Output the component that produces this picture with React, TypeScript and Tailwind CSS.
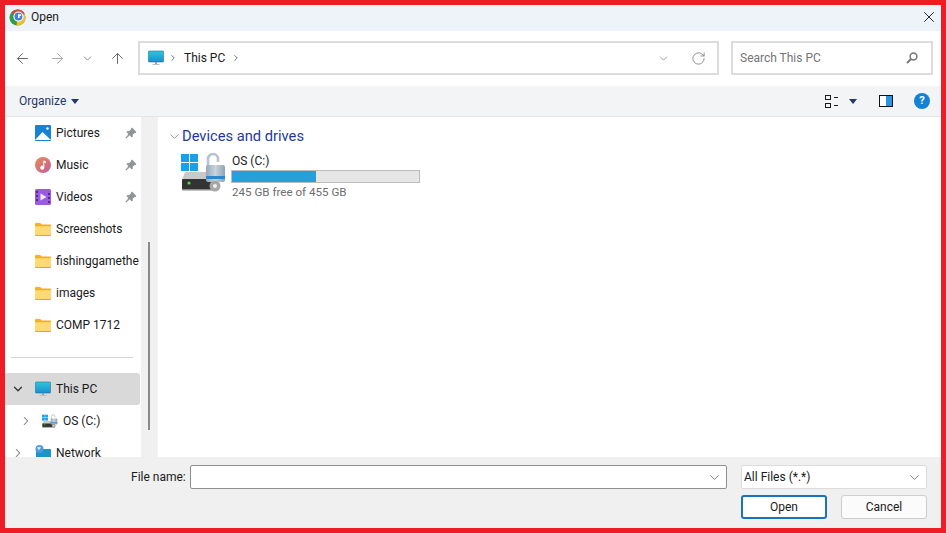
import { ArrowLeft, ArrowRight, ArrowUp, ChevronDown, ChevronRight, RotateCw, X } from 'lucide-react'

function ChromeLogo() {
  return (
    <svg width="17" height="17" viewBox="0 0 18 18">
      <circle cx="9" cy="9" r="8.500" fill="#2f9e4c" />
      <path d="M9 .5a8.500 8.500 0 0 1 7.600 4.700L9 9 2.600 3.500A8.500 8.500 0 0 1 9 .5z" fill="#d9453a" />
      <path d="M17.500 9A8.500 8.500 0 0 1 8 17.400L9 9l7.200-4a8.500 8.500 0 0 1 1.300 4z" fill="#f4bd2a" />
      <circle cx="10" cy="8" r="5.400" fill="#fff" />
      <circle cx="10" cy="8" r="4.200" fill="#3f80e4" />
      <path d="M9.500 5.500h3.400v1.800H11.300v2.200H9.500z" fill="#fff" />
    </svg>
  )
}

function Monitor({ size = 16 }: { size?: number }) {
  return (
    <svg width={size} height={size} viewBox="0 0 16 16">
      <defs>
        <linearGradient id="screen" x1="0" y1="0" x2="0" y2="1">
          <stop offset="0" stopColor="#2fc5dc" />
          <stop offset="1" stopColor="#1a8fd0" />
        </linearGradient>
      </defs>
      <rect x="0.400" y="1" width="15.200" height="11" rx="0.800" fill="url(#screen)" stroke="#2a6f96" strokeWidth="0.600" />
      <rect x="7" y="12" width="2" height="2" fill="#8aa0ad" />
      <rect x="4.500" y="14" width="7" height="1" fill="#b4c0c8" />
    </svg>
  )
}

function Folder() {
  return (
    <svg width="16" height="14" viewBox="0 0 16 14">
      <path d="M0 2a1 1 0 0 1 1-1h4.200l1.600 1.600H15a1 1 0 0 1 1 1V5H0z" fill="#f5b40f" />
      <path d="M0 4.200h16V13a1 1 0 0 1-1 1H1a1 1 0 0 1-1-1z" fill="#fdd97a" />
      <path d="M0 13h16v.2a.8.8 0 0 1-.8.8H.8a.8.8 0 0 1-.8-.8z" fill="#eaa90f" />
    </svg>
  )
}

function PicturesIcon() {
  return (
    <svg width="16" height="16" viewBox="0 0 16 16">
      <rect width="16" height="16" rx="1" fill="#1683d8" />
      <path d="M0 15l7.500-8L16 15z" fill="#fff" />
      <circle cx="12.500" cy="3.500" r="1.200" fill="#fff" />
    </svg>
  )
}

function MusicIcon() {
  return (
    <svg width="16" height="16" viewBox="0 0 16 16">
      <defs>
        <linearGradient id="music" x1="0" y1="0" x2="1" y2="1">
          <stop offset="0" stopColor="#ea8a52" />
          <stop offset="1" stopColor="#bf5fa0" />
        </linearGradient>
      </defs>
      <circle cx="8" cy="8" r="8" fill="url(#music)" />
      <path d="M8.200 3.500l2.800.8v1.600L9.300 5.400v5.200a2 2 0 1 1-1.100-1.700z" fill="#fff" />
    </svg>
  )
}

function VideosIcon() {
  return (
    <svg width="16" height="16" viewBox="0 0 16 16">
      <rect width="16" height="16" rx="1.500" fill="#9a5be0" />
      <path d="M5.500 4.500l6 3.500-6 3.500z" fill="#f4ecff" />
      <path d="M1 2h2v2H1zM1 6h2v2H1zM1 10h2v2H1zM13 4h2v2h-2zM13 8h2v2h-2zM13 12h2v2h-2z" fill="#4d2a8c" />
    </svg>
  )
}

function NetworkIcon() {
  return (
    <svg width="16" height="16" viewBox="0 0 16 16">
      <rect x="1" y="4" width="15" height="10" rx="0.600" fill="#1b95c9" />
      <circle cx="4.500" cy="4" r="4" fill="#4f9bd9" />
      <path d="M2 2.500c1.500-1 3-1 4 0-1 .8-1 2-2 2.500-1-.2-1.400-1.400-2-2.500z" fill="#cfe6f7" />
    </svg>
  )
}

function DriveIcon({ size = 46 }: { size?: number }) {
  return (
    <svg width={size} height={size * 0.87} viewBox="0 0 46 40">
      <defs>
        <linearGradient id="lock" x1="0" y1="0" x2="1" y2="0">
          <stop offset="0" stopColor="#93a9bb" />
          <stop offset="0.500" stopColor="#c9d4dc" />
          <stop offset="1" stopColor="#8ea2b3" />
        </linearGradient>
      </defs>
      <rect x="0" y="2" width="8" height="8" fill="#18a0ea" />
      <rect x="9" y="2" width="8" height="8" fill="#18a0ea" />
      <rect x="0" y="11" width="8" height="8" fill="#18a0ea" />
      <rect x="9" y="11" width="8" height="8" fill="#18a0ea" />
      <path d="M3 23c0-2 1-3 3-3h24v17H1v-9z" fill="#c9c9c9" />
      <rect x="1" y="27" width="36" height="11" rx="1" fill="#333" />
      <rect x="1" y="37" width="36" height="1.500" fill="#8a8a8a" />
      <circle cx="8" cy="31" r="1.600" fill="#4ade3a" />
      <path d="M27 15V7a5 5 0 0 1 10 0v3" fill="none" stroke="#b5c4cf" strokeWidth="2.600" />
      <rect x="25" y="13" width="19" height="17" rx="2" fill="url(#lock)" />
      <rect x="25" y="24" width="19" height="3" fill="#2f86c9" />
      <circle cx="34" cy="34" r="5.500" fill="#a7a7a7" />
      <circle cx="34" cy="34" r="2" fill="#eee" />
    </svg>
  )
}

function Pin() {
  return (
    <svg width="12" height="12" viewBox="0 0 12 12">
      <path d="M7 .6l4.400 4.400-1 .9-.7-.2-2 2 .2 1.700-1 1-2.100-2.100L1.200 11.400.6 10.800l2.900-3.700L1.400 5l1-1 1.700.2 2-2-.2-.7z" fill="#8f9499" />
    </svg>
  )
}

function NavRow({ icon, label, pinned }: { icon: React.ReactNode; label: string; pinned?: boolean }) {
  return (
    <div className="h-8 flex items-center pl-[30px] relative shrink-0">
      <span className="w-4 flex justify-center">{icon}</span>
      <span className="ml-[5px] whitespace-nowrap">{label}</span>
      {pinned && <span className="absolute left-[120px] top-[10px]"><Pin /></span>}
    </div>
  )
}

export default function App() {
  return (
    <div className="w-[946px] h-[533px] border-[5px] border-[#ee1c25] bg-white flex flex-col overflow-hidden text-[12px] text-[#1a1a1a] font-['Roboto','Noto_Sans',sans-serif]">
      {/* Title bar */}
      <div className="h-[26px] shrink-0 bg-[#eef2f9] flex items-center pl-1 pr-[3px] pb-[2px]">
        <ChromeLogo />
        <span className="ml-[5px]">Open</span>
        <X className="ml-auto" size={18} strokeWidth={1.3} color="#222" />
      </div>

      {/* Nav bar */}
      <div className="h-[55px] shrink-0 flex items-center pb-px text-[#555]">
        <ArrowLeft className="ml-[9px]" size={17} strokeWidth={1.4} color="#666" />
        <ArrowRight className="ml-[18px]" size={17} strokeWidth={1.4} color="#aaa" />
        <ChevronDown className="ml-[15px]" size={13} strokeWidth={1.6} color="#777" />
        <ArrowUp className="ml-[15px]" size={17} strokeWidth={1.4} color="#666" />
        <div className="ml-[12px] w-[581px] h-[34px] border-2 border-[#dcdcdc] flex items-center pl-2 pr-[11px] text-[#1a1a1a]">
          <Monitor />
          <ChevronRight className="ml-1" size={10} strokeWidth={2.200} color="#666" />
          <span className="ml-[6px]">This PC</span>
          <ChevronRight className="ml-[6px]" size={10} strokeWidth={2.200} color="#666" />
          <ChevronDown className="ml-auto" size={13} strokeWidth={1.300} color="#777" />
          <RotateCw className="ml-[21px]" size={15} strokeWidth={1.300} color="#777" />
        </div>
        <div className="ml-3 w-[202px] h-[34px] border-2 border-[#dcdcdc] flex items-center pl-[7px] pr-[13px] text-[#757575]">
          <span>Search This PC</span>
          <svg className="ml-auto" width="12" height="12" viewBox="0 0 12 12">
            <circle cx="7.500" cy="4.500" r="3.400" fill="none" stroke="#777" strokeWidth="1.500" />
            <path d="M5 7L1 11" stroke="#777" strokeWidth="2" />
          </svg>
        </div>
      </div>

      {/* Command bar */}
      <div className="h-[31px] shrink-0 bg-[#f3f4f6] border-b border-[#e6e6e6] flex items-center pl-[14px] pr-[11px]">
        <span className="text-[#1f3864]">Organize</span>
        <svg className="ml-[5px]" width="8" height="5" viewBox="0 0 8 5"><path d="M0 0h8L4 5z" fill="#1f3864" /></svg>
        <svg className="ml-auto" width="13" height="13" viewBox="0 0 13 13">
          <rect x="0.500" y="0.500" width="5" height="4" fill="none" stroke="#1a1a1a" />
          <rect x="0.500" y="8.500" width="5" height="4" fill="none" stroke="#1a1a1a" />
          <path d="M9 2.500h4M9 10.500h4" stroke="#1a1a1a" />
        </svg>
        <svg className="ml-[11px]" width="8" height="5" viewBox="0 0 8 5"><path d="M0 0h8L4 5z" fill="#1f3864" /></svg>
        <svg className="ml-[22px]" width="14" height="12" viewBox="0 0 14 12">
          <rect x="0.500" y="0.500" width="13" height="11" fill="#fff" stroke="#111" />
          <rect x="7" y="1" width="6" height="10" fill="#2a94e0" />
        </svg>
        <span className="ml-[21px] w-4 h-4 rounded-full bg-[#1282d6] text-white text-[11px] font-bold flex items-center justify-center">?</span>
      </div>

      {/* Body */}
      <div className="flex-1 flex min-h-0">
        <div className="w-[136px] shrink-0 overflow-hidden flex flex-col">
          <NavRow icon={<PicturesIcon />} label="Pictures" pinned />
          <NavRow icon={<MusicIcon />} label="Music" pinned />
          <NavRow icon={<VideosIcon />} label="Videos" pinned />
          <NavRow icon={<Folder />} label="Screenshots" />
          <NavRow icon={<Folder />} label="fishinggamethe" />
          <NavRow icon={<Folder />} label="images" />
          <NavRow icon={<Folder />} label="COMP 1712" />
          <div className="shrink-0 h-8 flex items-center pl-1.5 pr-2"><div className="w-full h-px bg-[#d6d6d6]" /></div>
          <div className="h-8 shrink-0 flex items-center bg-[#d9d9d9] rounded-r-[3px] pl-[6px] mr-px">
            <ChevronDown size={14} strokeWidth={2.200} color="#333" />
            <span className="ml-[10px]"><Monitor /></span>
            <span className="ml-[5px]">This PC</span>
          </div>
          <div className="h-8 shrink-0 flex items-center pl-[14px]">
            <ChevronRight size={14} strokeWidth={1.800} color="#777" />
            <span className="ml-[9px]"><DriveIcon size={16} /></span>
            <span className="ml-[5px]">OS (C:)</span>
          </div>
          <div className="h-8 shrink-0 flex items-center pl-[6px]">
            <ChevronRight size={14} strokeWidth={1.800} color="#777" />
            <span className="ml-[10px]"><NetworkIcon /></span>
            <span className="ml-[5px]">Network</span>
          </div>
        </div>

        {/* Nav scrollbar */}
        <div className="w-4 shrink-0 bg-[#f0f0f0] relative">
          <div className="absolute left-[7px] top-[125px] w-[2px] h-[188px] bg-[#8a8a8a]" />
        </div>

        {/* Content */}
        <div className="flex-1 pl-[9px] pt-[10px] border-l border-[#f3f3f3]">
          <div className="flex items-center">
            <ChevronDown size={15} strokeWidth={1} color="#555" />
            <span className="text-[14.700px] leading-[19px] text-[#1f3a93]">Devices and drives</span>
          </div>
          <div className="flex mt-[6px] ml-[14px]">
            <DriveIcon />
            <div className="ml-[4px] mt-[2px] w-[189px]">
              <div className="pl-px leading-[14px]">OS (C:)</div>
              <div className="mt-[2px] h-[13px] border border-[#bcbcbc] bg-[#e6e6e6]">
                <div className="h-full w-[45%] bg-[#26a0da]" />
              </div>
              <div className="mt-[1px] pl-px leading-[16px] text-[11.600px] text-[#6d6d6d]">245 GB free of 455 GB</div>
            </div>
          </div>
        </div>
      </div>

      {/* Footer */}
      <div className="h-[71px] shrink-0 bg-[#f0f0f0] pt-2 pl-[126px] pr-[14px]">
        <div className="flex items-center">
          <span className="w-[54px] whitespace-nowrap">File name:</span>
          <div className="ml-[5px] w-[537px] h-6 bg-white border border-[#8f8f8f] rounded-[2px] flex items-center justify-end pr-1">
            <ChevronDown size={15} strokeWidth={1.300} color="#666" />
          </div>
          <div className="ml-[14px] w-[186px] h-6 bg-white border border-[#dcdcdc] rounded-[2px] flex items-center pl-[2px] pr-1">
            <span>All Files (*.*)</span>
            <ChevronDown className="ml-auto" size={15} strokeWidth={1.300} color="#666" />
          </div>
        </div>
        <div className="flex justify-end gap-[14px] mt-[6px]">
          <button className="w-[86px] h-6 bg-white border-2 border-[#1a74bd] rounded-[3px] flex items-center justify-center">Open</button>
          <button className="w-[86px] h-6 bg-[#fbfbfb] border border-[#cfcfcf] rounded-[3px] flex items-center justify-center">Cancel</button>
        </div>
      </div>
    </div>
  )
}
